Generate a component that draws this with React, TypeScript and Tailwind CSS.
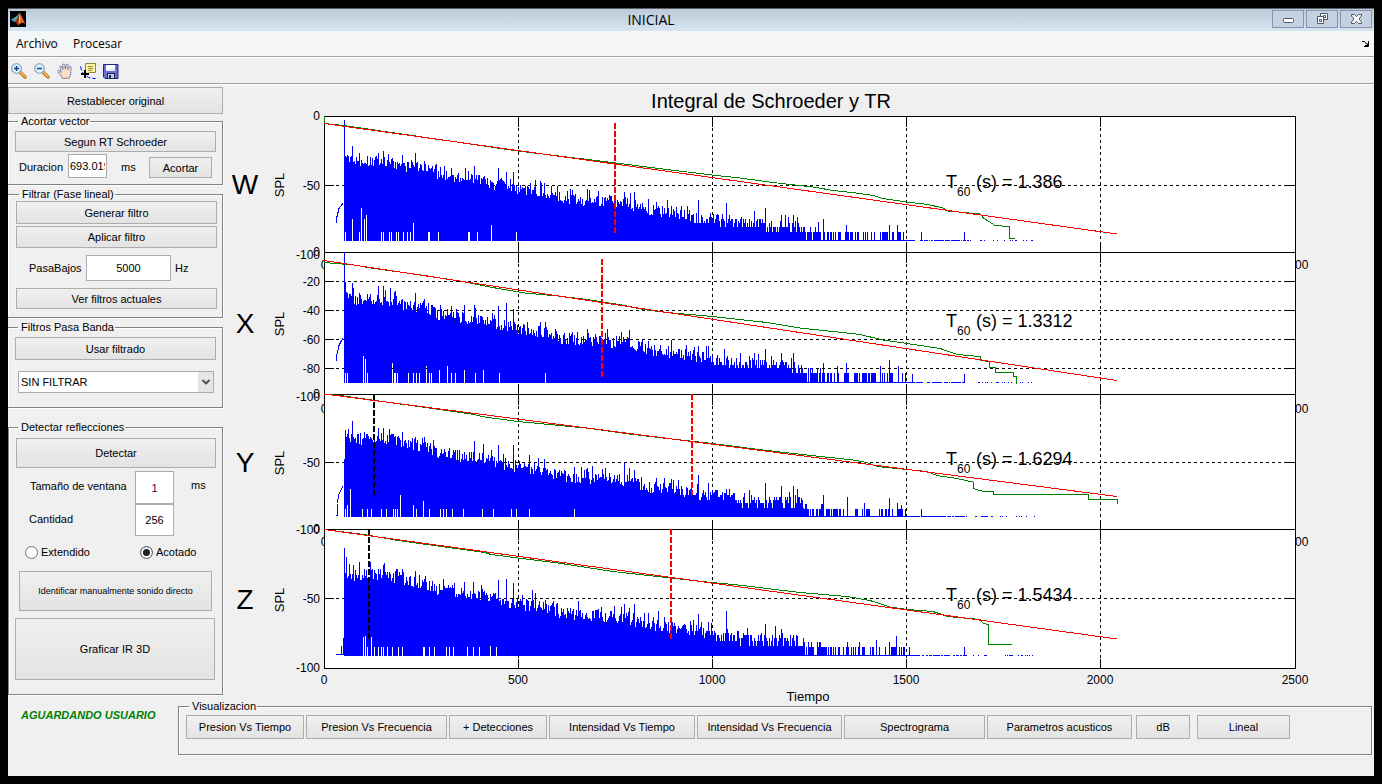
import React from "react";
import { FiChevronDown } from "react-icons/fi";

type Point = [number, number];

type Channel = {
  name: string;
  top: number;
  bottom: number;
  axisEnd: number;
  floor: number;
  ticks: number[];
  minLabel: number;
  xLabel: number;
  textY: number;
  t60: string;
  seed: number;
  attack: Point[];
  peaks: Point[];
  gaps: Point[];
  fit: Point[];
  decay: Point[];
  cut: [number, number, number];
  onset?: [number, number, number];
};

const LEFT = 324;
const RIGHT = 1295;
const GRID_X = [518, 712, 906, 1100];

// typical level of the response, x in pixels from the axis and level in -dB
const ENVELOPE: Point[] = [
  [20, 28], [22, 30], [26, 34], [34, 34], [51, 33], [67, 34], [84, 38], [101, 39],
  [114, 44], [134, 46], [151, 47], [167, 50], [184, 53], [201, 55], [217, 56],
  [234, 61], [251, 62], [283, 63], [296, 64], [309, 66], [326, 70], [343, 70],
  [359, 73], [376, 75], [409, 78], [426, 80], [480, 82],
];

const channels: Channel[] = [
  {
    name: "W",
    top: 116,
    bottom: 252,
    axisEnd: 254,
    floor: 91,
    ticks: [50],
    minLabel: 259,
    xLabel: 269,
    textY: 187,
    t60: "1.386",
    seed: 11,
    attack: [[12, 79], [13, 74], [15, 68], [17, 66], [19, 64]],
    peaks: [
      [20, 3], [28, 22], [35, 27], [54, 27], [59, 26], [78, 29], [91, 27], [100, 33],
      [127, 38], [150, 37], [174, 38], [182, 41], [189, 41], [211, 47], [216, 48],
      [220, 49], [243, 55], [263, 54], [300, 56], [310, 56], [324, 61], [343, 62],
      [374, 62], [402, 64], [430, 70], [441, 68], [457, 73], [461, 73], [469, 73],
      [473, 74], [494, 78], [499, 76], [522, 80], [565, 80], [573, 80], [597, 85], [640, 85],
    ],
    gaps: [
      [21, 85], [28, 76], [35, 85], [37, 68], [40, 76], [42, 73], [57, 85], [59, 85],
      [65, 85], [67, 85], [72, 85], [74, 85], [79, 85], [83, 85], [86, 85], [89, 79],
      [104, 85], [105, 85], [114, 85], [144, 85], [145, 85], [153, 85], [167, 80], [192, 85],
    ],
    fit: [[0, 5.6], [793, 86.8]],
    decay: [
      [0, 0], [0, 5.6], [20, 7], [30, 8], [194, 25.9], [276, 33], [343, 39.5], [388, 43.4],
      [416, 45.6], [449, 48.8], [489, 52.2], [509, 54.7], [536, 56.9], [549, 58.3],
      [559, 60.8], [583, 63.2], [604, 65.2], [619, 67.6], [624, 70], [656, 72],
      [660, 75.5], [665, 77.5], [671, 80.4], [685, 81.4], [685, 90], [691, 90],
    ],
    cut: [290, 5, 86],
  },
  {
    name: "X",
    top: 252,
    bottom: 394,
    axisEnd: 397,
    floor: 91.5,
    ticks: [20, 40, 60, 80],
    minLabel: 401,
    xLabel: 413,
    textY: 326,
    t60: "1.3312",
    seed: 29,
    attack: [[12, 77], [13, 72], [15, 66], [17, 63], [19, 61]],
    peaks: [
      [20, 0], [21, 21], [28, 22], [35, 29], [54, 24], [59, 24], [70, 28], [91, 29],
      [100, 33], [104, 36], [127, 38], [140, 37], [150, 37], [174, 38], [182, 36],
      [189, 40], [203, 49], [216, 49], [221, 49], [248, 56], [263, 54], [281, 57],
      [297, 56], [305, 55], [324, 63], [347, 62], [374, 66], [384, 66], [400, 68],
      [416, 71], [430, 71], [441, 68], [457, 71], [469, 71], [499, 78], [513, 80],
      [522, 78], [556, 80], [565, 76], [574, 80], [588, 86], [640, 86], [644, 86],
    ],
    gaps: [
      [21, 85], [23, 85], [39, 73], [41, 75], [43, 85], [68, 78], [70, 85], [71, 85],
      [73, 85], [84, 85], [89, 85], [92, 85], [95, 85], [102, 80], [105, 85], [107, 85],
      [115, 83], [123, 80], [127, 85], [131, 85], [140, 83], [151, 85], [159, 83],
      [175, 85], [221, 85],
    ],
    fit: [[0, 5.9], [793, 90.4]],
    decay: [
      [0, 7.5], [30, 9.2], [50, 11.7], [101, 16.4], [141, 21.1], [174, 25.8], [201, 28.9],
      [234, 31], [263, 33.6], [301, 37.5], [319, 40.4], [343, 42.5], [366, 44.1],
      [388, 45.3], [443, 49.8], [476, 53.5], [509, 55.9], [536, 58.2], [559, 62],
      [583, 64.3], [616, 68], [633, 72.3], [656, 73.5], [657, 76.3], [665, 77],
      [665, 81], [671, 81], [671, 84.5], [689, 84.5], [689, 87.6], [692, 87.6], [692, 92.5],
    ],
    cut: [277, 5, 89],
  },
  {
    name: "Y",
    top: 394,
    bottom: 529,
    axisEnd: 530,
    floor: 90.5,
    ticks: [50],
    minLabel: 534,
    xLabel: 546,
    textY: 464,
    t60: "1.6294",
    seed: 47,
    attack: [[12, 90], [13, 90], [13, 81], [15, 74], [17, 71], [19, 68]],
    peaks: [
      [20, 48], [21, 27], [24, 26], [28, 20], [36, 29], [40, 28], [54, 25], [59, 25],
      [65, 26], [78, 28], [91, 32], [100, 32], [150, 35], [159, 37], [174, 38],
      [189, 38], [205, 45], [220, 48], [250, 54], [263, 55], [281, 55], [300, 51],
      [305, 55], [310, 56], [332, 62], [347, 63], [374, 60], [384, 66], [402, 70],
      [441, 66], [457, 68], [469, 68], [473, 70], [477, 77], [499, 75], [523, 76],
      [540, 81], [565, 77], [573, 81], [577, 82], [597, 85],
    ],
    gaps: [
      [21, 85], [23, 82], [26, 70], [38, 85], [43, 85], [47, 85], [57, 85], [62, 85],
      [69, 85], [71, 85], [73, 85], [76, 75], [89, 82], [92, 85], [99, 79], [105, 85],
      [116, 85], [119, 85], [122, 85], [128, 85], [139, 85], [158, 85], [169, 85],
      [187, 85], [192, 85], [205, 85], [250, 85],
    ],
    fit: [[0, 0], [793, 75.8]],
    decay: [
      [0, 0], [20, 1.3], [147, 14.8], [161, 17], [194, 20.2], [267, 25.7], [301, 29.4],
      [326, 31.6], [388, 36.8], [443, 42], [483, 45.2], [529, 48.9], [543, 50.6],
      [553, 53.6], [583, 56], [603, 57.5], [613, 60.5], [633, 62.5], [649, 65],
      [649, 70], [658, 72], [669, 72], [669, 74.2], [764, 74.2], [764, 77.8],
      [793, 77.8], [793, 81.5],
    ],
    cut: [367, 0, 75],
    onset: [50, 0, 75],
  },
  {
    name: "Z",
    top: 529,
    bottom: 668,
    axisEnd: 667,
    floor: 90.3,
    ticks: [50],
    minLabel: 672,
    xLabel: 684,
    textY: 600,
    t60: "1.5434",
    seed: 83,
    attack: [[12, 90], [17, 90], [17, 84], [18, 90], [19, 90], [19, 78]],
    peaks: [
      [20, 14], [22, 20], [29, 26], [35, 24], [46, 24], [54, 29], [59, 26], [71, 30],
      [78, 29], [91, 30], [100, 36], [130, 39], [149, 38], [174, 37], [182, 36],
      [189, 39], [208, 44], [211, 46], [221, 51], [229, 52], [254, 52], [300, 54],
      [305, 57], [310, 54], [334, 59], [347, 63], [374, 61], [402, 59], [441, 68],
      [451, 70], [457, 72], [469, 76], [473, 77], [496, 81], [523, 81], [535, 81],
      [552, 80], [565, 81], [572, 77], [585, 85], [640, 85],
    ],
    gaps: [
      [39, 78], [41, 77], [43, 85], [47, 78], [50, 85], [54, 85], [57, 85], [59, 85],
      [63, 85], [68, 85], [74, 85], [78, 85], [99, 85], [100, 85], [105, 85], [110, 85],
      [122, 85], [125, 85], [129, 85], [143, 85], [149, 85], [155, 85], [166, 84], [172, 85],
    ],
    fit: [[0, 0.3], [793, 79.1]],
    decay: [
      [0, 0.5], [40, 4], [74, 8.4], [114, 12.2], [161, 16.8], [167, 18.5], [194, 20.9],
      [234, 24.5], [289, 30.4], [329, 33.8], [388, 38.6], [419, 40.8], [443, 42.9],
      [476, 45.6], [523, 48.7], [546, 51.3], [566, 56.1], [583, 57.8], [609, 59.5],
      [624, 63.1], [656, 65], [659, 67.6], [664, 68.8], [664, 82.7], [688, 82.7],
    ],
    cut: [346, 0, 79],
    onset: [45, 0, 79],
  },
];

function noise(i: number, seed: number) {
  let h = Math.imul(i + 1, 374761393) ^ Math.imul(seed, 668265263);
  h = Math.imul(h ^ (h >>> 13), 1274126177);
  return ((h ^ (h >>> 16)) >>> 0) / 4294967296;
}

function envelopeAt(x: number) {
  for (let i = 1; i < ENVELOPE.length; i++) {
    const [x0, y0] = ENVELOPE[i - 1];
    const [x1, y1] = ENVELOPE[i];
    if (x <= x1) return y0 + ((y1 - y0) * (x - x0)) / (x1 - x0);
  }
  return 91;
}

// levels close to the floor fall on whole sample steps
function quantize(level: number, floor: number) {
  const n = Math.max(1, Math.round(Math.pow(10, (floor - level) / 20)));
  return floor - 20 * Math.log10(n);
}

function levelAt(x: number, ch: Channel) {
  const peak = ch.peaks.find((p) => p[0] === x);
  if (peak) return peak[1];
  const a = noise(x, ch.seed);
  const b = noise(x, ch.seed + 5);
  if (x < 480) {
    return quantize(envelopeAt(x) + 4 - a * 9 - (b > 0.85 ? 4 : 0), ch.floor);
  }
  if (x < 505) return a < 0.7 ? (b > 0.7 ? 81.5 : 85) : ch.floor;
  if (x < 545) return a < 0.5 ? 85 : ch.floor;
  if (x < 582) return a < 0.35 ? 85 : ch.floor;
  return ch.floor;
}

function signalPath(ch: Channel) {
  const y = (level: number) =>
    Math.round(ch.top + (level * (ch.bottom - ch.top)) / 100);
  const base = y(ch.floor) + 1;
  let d = "";
  for (let x = 20; x < 712; x++) {
    if (x > 590 && x < 640 && noise(x, ch.seed + 9) > 0.8) continue;
    if (x > 640 && noise(x, ch.seed + 9) > 0.25) continue;
    const level = levelAt(x, ch);
    const gap = ch.gaps.find((g) => g[0] === x);
    const top = Math.min(y(level), base - 1);
    d += `M${LEFT + x} ${top}h1V${gap ? y(gap[1]) : base}h-1z`;
  }
  return d;
}

function Plot({ channel: ch }: { channel: Channel }) {
  const y = (level: number) => ch.top + (level * (ch.bottom - ch.top)) / 100;
  const line = (points: Point[]) =>
    points.map(([px, level]) => `${LEFT + px},${Math.round(y(level) * 2) / 2}`).join(" ");
  const middle = Math.round((ch.top + ch.bottom) / 2);

  return (
    <g shapeRendering="crispEdges">
      <rect
        x={LEFT + 0.5}
        y={ch.top + 0.5}
        width={RIGHT - LEFT}
        height={ch.bottom - ch.top}
        fill="#fff"
        stroke="#000"
      />
      {GRID_X.map((gx) => (
        <g key={gx} stroke="#000">
          <line x1={gx + 0.5} x2={gx + 0.5} y1={ch.top} y2={ch.bottom} strokeDasharray="3 3" />
          <line x1={gx + 0.5} x2={gx + 0.5} y1={ch.top} y2={ch.top + 11} />
          <line x1={gx + 0.5} x2={gx + 0.5} y1={ch.bottom - 9} y2={ch.bottom} />
        </g>
      ))}
      {ch.ticks.map((tick) => {
        const ty = Math.floor(ch.top + (tick * (ch.axisEnd - ch.top)) / 100);
        return (
          <g key={tick}>
            <g stroke="#000">
              <line x1={LEFT} x2={RIGHT} y1={ty + 0.5} y2={ty + 0.5} strokeDasharray="3 3" />
              <line x1={LEFT} x2={LEFT + 10} y1={ty + 0.5} y2={ty + 0.5} />
              <line x1={RIGHT - 10} x2={RIGHT} y1={ty + 0.5} y2={ty + 0.5} />
            </g>
            <text x={320} y={ty + 5} fontSize="12" textAnchor="end">
              -{tick}
            </text>
          </g>
        );
      })}
      <text x={320} y={ch.top + 4} fontSize="12" textAnchor="end">0</text>
      <text x={320} y={ch.minLabel} fontSize="12" textAnchor="end">-100</text>

      <polyline points={line(ch.attack)} fill="none" stroke="#00f" />
      <path d={signalPath(ch)} fill="#00f" />
      <polyline points={line(ch.decay)} fill="none" stroke="#008000" />
      <polyline points={line(ch.fit)} fill="none" stroke="#f00" />
      <line
        x1={LEFT + ch.cut[0] + 1}
        x2={LEFT + ch.cut[0] + 1}
        y1={y(ch.cut[1])}
        y2={y(ch.cut[2])}
        stroke="#f00"
        strokeWidth="2"
        strokeDasharray="6 2"
      />
      {ch.onset && (
        <line
          x1={LEFT + ch.onset[0]}
          x2={LEFT + ch.onset[0]}
          y1={y(ch.onset[1])}
          y2={y(ch.onset[2])}
          stroke="#000"
          strokeWidth="2"
          strokeDasharray="6 2"
        />
      )}

      <text x={245} y={middle + 10} fontSize="28" textAnchor="middle">{ch.name}</text>
      <text transform={`translate(284 ${middle + 1}) rotate(-90)`} fontSize="13" textAnchor="middle">
        SPL
      </text>
      <text x={946} y={ch.textY + 1} fontSize="18">T</text>
      <text x={957} y={ch.textY + 9} fontSize="12">60</text>
      <text x={976} y={ch.textY + 1} fontSize="18">(s) = {ch.t60}</text>
      <text x={LEFT} y={ch.xLabel} fontSize="12" textAnchor="middle">0</text>
      <text x={RIGHT} y={ch.xLabel} fontSize="12" textAnchor="middle">2500</text>
    </g>
  );
}

function Chart() {
  return (
    <svg
      viewBox="224 85 1150 610"
      className="block h-auto w-full overflow-visible"
      role="img"
      aria-label="Integral de Schroeder y TR"
    >
      <text x={771} y={108} fontSize="20" textAnchor="middle">Integral de Schroeder y TR</text>
      {channels.map((channel) => (
        <Plot key={channel.name} channel={channel} />
      ))}
      {GRID_X.map((gx, i) => (
        <text key={gx} x={gx} y={684} fontSize="12" textAnchor="middle">{(i + 1) * 500}</text>
      ))}
      <text x={808} y={701} fontSize="13" textAnchor="middle">Tiempo</text>
    </svg>
  );
}

function Button({ className = "", ...props }: React.ButtonHTMLAttributes<HTMLButtonElement>) {
  return (
    <button
      type="button"
      className={`shrink-0 border border-[#adadad] bg-linear-to-b from-[#f0f0f0] to-[#e3e3e3] text-center whitespace-nowrap ${className}`}
      {...props}
    />
  );
}

function Panel({
  title,
  className = "",
  children,
}: {
  title: string;
  className?: string;
  children: React.ReactNode;
}) {
  return (
    <fieldset
      className={`min-w-0 border border-[#828282] shadow-[1px_1px_0_#fff,inset_1px_1px_0_#fff] ${className}`}
    >
      <legend className="ml-[3px] h-[14px] pr-px pl-[3px] leading-[14px]">{title}</legend>
      {children}
    </fieldset>
  );
}

function MatlabLogo() {
  return (
    <svg width="16" height="16" viewBox="0 0 16 16" aria-hidden="true">
      <rect width="16" height="16" fill="#000" />
      <path d="M0.5 8.5 4.5 6.5 6.5 8.5 4 11z" fill="#3d8fb5" />
      <path d="M4.5 6.5C6.5 6 7.5 4 9.5 1.5L7.5 9 4 11z" fill="#5aa7c4" />
      <path d="M9.5 1.5C8 5 7.5 9 4 11 6 11 7 13 8 14.5 7.5 10 9 6 9.5 1.5z" fill="#8c2a12" />
      <path d="M9.5 1.5C11.5 4 13 9 15.5 13 12.5 10.5 10.5 12 8 14.5 8 9 9.3 5.5 9.5 1.5z" fill="#e8641b" />
      <path d="M9.7 3C10.6 6 10.8 9 9 13 8.3 9 9.3 6 9.7 3z" fill="#fbc04a" />
    </svg>
  );
}

function ZoomIcon({ plus }: { plus?: boolean }) {
  return (
    <svg width="16" height="16" viewBox="0 0 16 16" aria-hidden="true">
      <path d="M9.5 9.5 14 14" stroke="#b8741c" strokeWidth="3.4" strokeLinecap="round" />
      <path d="M10 9.6 14 13.6" stroke="#f7b955" strokeWidth="1.8" strokeLinecap="round" />
      <circle cx="5.5" cy="5.5" r="4.8" fill="#d9f3fb" stroke="#8fa9c4" strokeWidth="1.3" />
      <path d="M3 5.5h5" stroke="#17418a" strokeWidth="1.5" />
      {plus && <path d="M5.5 3v5" stroke="#17418a" strokeWidth="1.5" />}
    </svg>
  );
}

function HandIcon() {
  return (
    <svg width="16" height="16" viewBox="0 0 16 16" aria-hidden="true">
      <path
        d="M5.5 15.5C4.5 13 2 10.5.7 8.6.2 7.6 1.5 7 2.4 7.8L4.2 9.5 3 4.5C2.6 3.2 4.2 2.6 4.8 3.8L6 6.5 5.8 2C5.8.6 7.5.5 7.8 1.8L8.3 6 9.3 1.8C9.7.6 11.2.9 11.1 2.2L10.8 6.5 12.6 3.8C13.3 2.8 14.6 3.4 14.2 4.7 13.4 7 14.8 10.5 12 15.5z"
        fill="#fbdcc4"
        stroke="#3f5f9f"
        strokeDasharray="1.5 .7"
      />
      <path d="M5.5 15h6.5" stroke="#dba888" />
    </svg>
  );
}

function CursorIcon() {
  return (
    <svg width="16" height="16" viewBox="0 0 16 16" aria-hidden="true">
      <path d="M.5 3.5C1.5 8 3 11 6 13s6 2.5 9.5 2.5" fill="none" stroke="#00f" strokeDasharray="4 2" />
      <path d="M5.5.5h10v9h-6L6 12V9.500h-.5z" fill="#fbf3a0" stroke="#8d8742" />
      <path d="M8 3.500h5M8 5.500h5M8 7.500h4" stroke="#8d8742" />
      <path d="M5 7v8M1 11h8" stroke="#000" strokeWidth="2" />
    </svg>
  );
}

function SaveIcon() {
  return (
    <svg width="16" height="16" viewBox="0 0 16 16" aria-hidden="true">
      <path d="M.5 1.5h14.500v14H2L.5 14z" fill="#6470d8" stroke="#22277e" />
      <path d="M3 2h9v6H3z" fill="#e9eefc" />
      <path d="M3 2h9v2.500L3 7z" fill="#fff" />
      <path d="M4 10h8v5.500H4z" fill="#20244f" />
      <path d="M5 11h6v4H5z" fill="#c9cede" />
      <path d="M6 12h2v3H6z" fill="#20244f" />
    </svg>
  );
}

const tools = [
  { label: "Zoom In", icon: <ZoomIcon plus /> },
  { label: "Zoom Out", icon: <ZoomIcon /> },
  { label: "Pan", icon: <HandIcon /> },
  { label: "Data Cursor", icon: <CursorIcon /> },
  { label: "Save", icon: <SaveIcon /> },
];

const windowButtons = [
  {
    label: "Minimizar",
    icon: <rect x="3.5" y="6.5" width="10" height="4" rx="1" fill="#fff" stroke="#4d5566" />,
  },
  {
    label: "Restaurar",
    icon: (
      <g fill="#fff" stroke="#4d5566">
        <path d="M6.5 1.5h7v6h-7z" />
        <path d="M9.5 3.5h2v2h-2z" />
        <path d="M3.5 4.5h6v7h-6z" />
        <path d="M5.5 7.5h2v2h-2z" />
      </g>
    ),
  },
  {
    label: "Cerrar",
    icon: (
      <path
        d="M3.5 2.5H6.5L8.5 4.700 10.5 2.5H13.5V4L11 7 13.500 10V11.5H10.5L8.5 9.300 6.5 11.5H3.5V10L6 7 3.5 4z"
        fill="#fff"
        stroke="#4d5566"
      />
    ),
  },
];

function TitleBar() {
  return (
    <header className="flex h-[23px] items-start justify-between border-t border-[#5a5f66] bg-linear-to-b from-[#bccad9] to-[#d7e4f1] pl-0.5">
      <span className="w-5 pt-0.5">
        <MatlabLogo />
      </span>
      <h1 className="font-[Open_Sans,sans-serif] text-sm leading-[21px]">INICIAL</h1>
      <div className="flex gap-0.5 pt-px pr-0.5">
        {windowButtons.map(({ label, icon }) => (
          <button
            key={label}
            type="button"
            aria-label={label}
            className="flex h-[18px] w-8 items-center justify-center border border-[#8494ad] bg-[#c3d1e0]"
          >
            <svg width="16" height="14" viewBox="0 0 16 14">{icon}</svg>
          </button>
        ))}
      </div>
    </header>
  );
}

function Sidebar() {
  return (
    <aside className="flex w-[215px] shrink-0 flex-col pt-0.5">
      <Button className="h-[27px]">Restablecer original</Button>

      <Panel title="Acortar vector" className="h-[71px] border-l-0 pt-[3px] pl-[7px]">
        <Button className="block h-[21px] w-[201px]">Segun RT Schroeder</Button>
        <div className="mt-0.5 flex items-end">
          <label htmlFor="duracion" className="w-[53px] pb-1 pl-1">Duracion</label>
          <input
            id="duracion"
            defaultValue="693.019"
            className="h-6 w-[39px] border border-[#abadb3] bg-white px-px"
          />
          <span className="w-[42px] pb-1 pl-[14px]">ms</span>
          <Button className="h-[21px] w-[63px]">Acortar</Button>
        </div>
      </Panel>

      <Panel title="Filtrar (Fase lineal)" className="mt-0.5 h-[131px] border-l-0 pl-2">
        <Button className="block h-[23px] w-[201px]">Generar filtro</Button>
        <Button className="mt-0.5 block h-[22px] w-[201px]">Aplicar filtro</Button>
        <div className="mt-[7px] flex items-center">
          <label htmlFor="pasabajos" className="w-[70px] pl-[13px]">PasaBajos</label>
          <input
            id="pasabajos"
            defaultValue="5000"
            className="h-[26px] w-[85px] border border-[#abadb3] bg-white text-center"
          />
          <span className="pl-1">Hz</span>
        </div>
        <Button className="mt-[7px] block h-[21px] w-[201px]">Ver filtros actuales</Button>
      </Panel>

      <Panel title="Filtros Pasa Banda" className="mt-0.5 h-[88px] border-l-0 pt-[3px] pl-[7px]">
        <Button className="block h-[23px] w-[201px]">Usar filtrado</Button>
        <div className="relative mt-[11px] ml-[3px] h-[22px] w-[196px]">
          <select
            aria-label="Filtros Pasa Banda"
            className="h-full w-full appearance-none border border-[#abadb3] bg-white pl-[2px]"
          >
            <option>SIN FILTRAR</option>
          </select>
          <span className="pointer-events-none absolute inset-y-px right-px flex w-[15px] items-center justify-center bg-[#e6e6e6]">
            <FiChevronDown className="h-3 w-3 stroke-[4] text-[#505050]" />
          </span>
        </div>
      </Panel>

      <Panel title="Detectar reflecciones" className="mt-3 h-[275px] pt-1 pl-[6px]">
        <Button className="ml-px block h-[30px] w-[200px]">Detectar</Button>
        <div className="mt-[3px] flex items-center">
          <label htmlFor="ventana" className="w-[120px] pb-[3px] pl-[15px]">Tamaño de ventana</label>
          <input
            id="ventana"
            defaultValue="1"
            className="h-[33px] w-[39px] border border-[#abadb3] bg-white text-center text-[#500050]"
          />
          <span className="pb-[5px] pl-[17px]">ms</span>
        </div>
        <div className="flex items-center">
          <label htmlFor="cantidad" className="w-[120px] pb-[3px] pl-[14px]">Cantidad</label>
          <input
            id="cantidad"
            defaultValue="256"
            className="h-8 w-[39px] border border-[#abadb3] bg-white text-center"
          />
        </div>
        <div className="mt-[10px] grid grid-cols-[115px_auto] pl-[10px] leading-[13px]">
          {["Extendido", "Acotado"].map((name) => (
            <label key={name} className="flex items-center gap-[3px]">
              <input
                type="radio"
                name="modo"
                defaultChecked={name === "Acotado"}
                className="h-[13px] w-[13px] appearance-none rounded-full border border-[#707070] bg-white checked:bg-[#222] checked:shadow-[inset_0_0_0_2px_#fff]"
              />
              {name}
            </label>
          ))}
        </div>
        <Button className="mt-3 ml-1 block h-10 w-[193px] text-[9px]">
          Identificar manualmente sonido directo
        </Button>
        <Button className="mt-[7px] block h-[62px] w-[200px]">Graficar IR 3D</Button>
      </Panel>
    </aside>
  );
}

export default function App() {
  return (
    <div className="min-h-screen bg-black p-2 font-[Liberation_Sans,Arial,sans-serif] text-[11px] leading-[14px] text-black">
      <div className="flex min-h-[768px] flex-col bg-[#f0f0f0]">
        <TitleBar />
        <nav className="flex h-[26px] items-center border-b border-[#a0a0a0] bg-[#f5f6f7] pl-2 font-[Open_Sans,sans-serif] text-xs">
          <button type="button" className="w-[57px] text-left">Archivo</button>
          <button type="button">Procesar</button>
          <svg className="mr-[5px] ml-auto" width="7" height="6" viewBox="0 0 7 6" aria-hidden="true">
            <path d="M0 .5h2.500L5 3.500M6.500 0v5.500H2M3 4.500h3M5.500 2.500v3" fill="none" stroke="#000" />
          </svg>
        </nav>
        <div className="flex h-[27px] items-center gap-[7px] border-t border-b border-t-white border-b-[#a0a0a0] pl-[3px]">
          {tools.map(({ label, icon }) => (
            <button key={label} type="button" aria-label={label}>
              {icon}
            </button>
          ))}
        </div>

        <main className="flex items-start border-t border-white">
          <Sidebar />
          <div className="ml-px min-w-0 flex-1">
            <Chart />
          </div>
        </main>

        <footer className="mt-1 flex items-start pr-0.5">
          <p className="w-[170px] shrink-0 pt-[9px] pl-[13px] font-bold text-[#008000] italic">
            AGUARDANDO USUARIO
          </p>
          <Panel title="Visualizacion" className="h-14 flex-1 pt-0.5 pl-[7px]">
            <div className="flex gap-0.5">
              <Button className="h-6 w-[118px]">Presion Vs Tiempo</Button>
              <Button className="h-6 w-[141px]">Presion Vs Frecuencia</Button>
              <Button className="h-6 w-[98px]">+ Detecciones</Button>
              <Button className="h-6 w-[146px]">Intensidad Vs Tiempo</Button>
              <Button className="h-6 w-[145px]">Intensidad Vs Frecuencia</Button>
              <Button className="h-6 w-[141px]">Spectrograma</Button>
              <Button className="h-6 w-[145px]">Parametros acusticos</Button>
              <Button className="ml-0.5 h-6 w-[54px]">dB</Button>
              <Button className="ml-[5px] h-6 w-[93px]">Lineal</Button>
            </div>
          </Panel>
        </footer>
      </div>
    </div>
  );
}
